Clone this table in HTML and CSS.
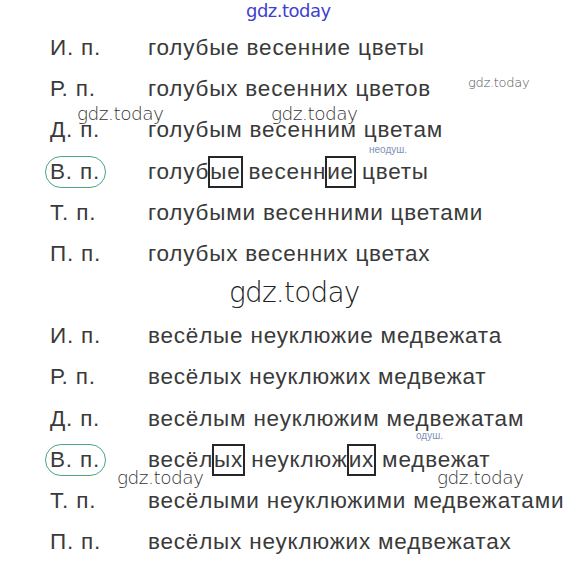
FILE: index.html
```
<!DOCTYPE html>
<html lang="ru">
<head>
<meta charset="utf-8">
<link rel="stylesheet" href="styles.css">
</head>
<body>
<div class="page">
  <div class="wm wm-top">gdz.today</div>
  <div class="wm wm-right">gdz.today</div>
  <div class="wm wm-a">gdz.today</div>
  <div class="wm wm-b">gdz.today</div>
  <div class="wm wm-c">gdz.today</div>
  <div class="wm wm-d">gdz.today</div>

  <div class="table">
    <div class="lbl">И. п.</div><div class="ph">голубые весенние цветы</div>
    <div class="lbl">Р. п.</div><div class="ph">голубых весенних цветов</div>
    <div class="lbl">Д. п.</div><div class="ph">голубым весенним цветам</div>
    <div class="lbl"><span class="ring">В. п.</span></div><div class="ph">голуб<span class="box">ые</span> весенн<span class="box">ие</span> цветы<span class="note note1">неодуш.</span></div>
    <div class="lbl">Т. п.</div><div class="ph">голубыми весенними цветами</div>
    <div class="lbl">П. п.</div><div class="ph">голубых весенних цветах</div>
  </div>

  <div class="wm-mid">gdz.today</div>

  <div class="table">
    <div class="lbl">И. п.</div><div class="ph">весёлые неуклюжие медвежата</div>
    <div class="lbl">Р. п.</div><div class="ph">весёлых неуклюжих медвежат</div>
    <div class="lbl">Д. п.</div><div class="ph">весёлым неуклюжим медвежатам</div>
    <div class="lbl"><span class="ring">В. п.</span></div><div class="ph">весёл<span class="box">ых</span> неуклюж<span class="box">их</span> медвежат<span class="note note2">одуш.</span></div>
    <div class="lbl">Т. п.</div><div class="ph">весёлыми неуклюжими медвежатами</div>
    <div class="lbl">П. п.</div><div class="ph">весёлых неуклюжих медвежатах</div>
  </div>
</div>
</body>
</html>
```
FILE: styles.css
```
html, body {
  margin: 0;
  padding: 0;
  background: #fff;
}
.page {
  position: relative;
  width: 575px;
  height: 566px;
  overflow: hidden;
  padding: 27px 0 0 50px;
  box-sizing: border-box;
  font-family: "Liberation Sans", Arial, sans-serif;
  color: #3a3a3a;
}
.table {
  display: grid;
  grid-template-columns: 98px auto;
  grid-auto-rows: 41.2px;
  align-items: center;
  font-size: 22.5px;
  letter-spacing: 0.8px;
  line-height: 41px;
}
.ph {
  position: relative;
  white-space: nowrap;
}
.lbl {
  position: relative;
}
.ring {
  position: relative;
}
.ring::before {
  content: "";
  position: absolute;
  left: -5px;
  right: -6px;
  top: -3px;
  bottom: -4px;
  border: 1.6px solid #4aa585;
  border-radius: 16px;
}
.box {
  display: inline-block;
  border: 2px solid #262626;
  line-height: 28px;
  padding: 0;
  margin: 0 -1px;
}
.note {
  position: absolute;
  font-size: 10px;
  line-height: 10px;
  letter-spacing: 0;
  color: #8090b8;
}
.note1 {
  left: 221px;
  top: -6px;
}
.note2 {
  left: 268px;
  top: -8px;
}
.wm {
  position: absolute;
  font-family: "DejaVu Sans", sans-serif;
  font-weight: 200;
  color: #333;
  z-index: 2;
}
.wm-top {
  left: 246px;
  top: 0px;
  font-size: 18px;
  font-weight: normal;
  color: #4040d0;
  letter-spacing: -0.5px;
}
.wm-right {
  left: 468px;
  top: 75px;
  font-size: 13px;
  color: #555;
  letter-spacing: -0.3px;
}
.wm-a {
  left: 77px;
  top: 103px;
  font-size: 18.5px;
  letter-spacing: -0.5px;
}
.wm-b {
  left: 271px;
  top: 103px;
  font-size: 18.5px;
  letter-spacing: -0.5px;
}
.wm-c {
  left: 117px;
  top: 467px;
  font-size: 18.5px;
  letter-spacing: -0.5px;
}
.wm-d {
  left: 437px;
  top: 467px;
  font-size: 18.5px;
  letter-spacing: -0.5px;
}
.wm-mid {
  height: 41px;
  line-height: 38px;
  padding-left: 179px;
  font-family: "DejaVu Sans", sans-serif;
  font-weight: 200;
  font-size: 28px;
  color: #222;
  letter-spacing: -0.8px;
}
```
